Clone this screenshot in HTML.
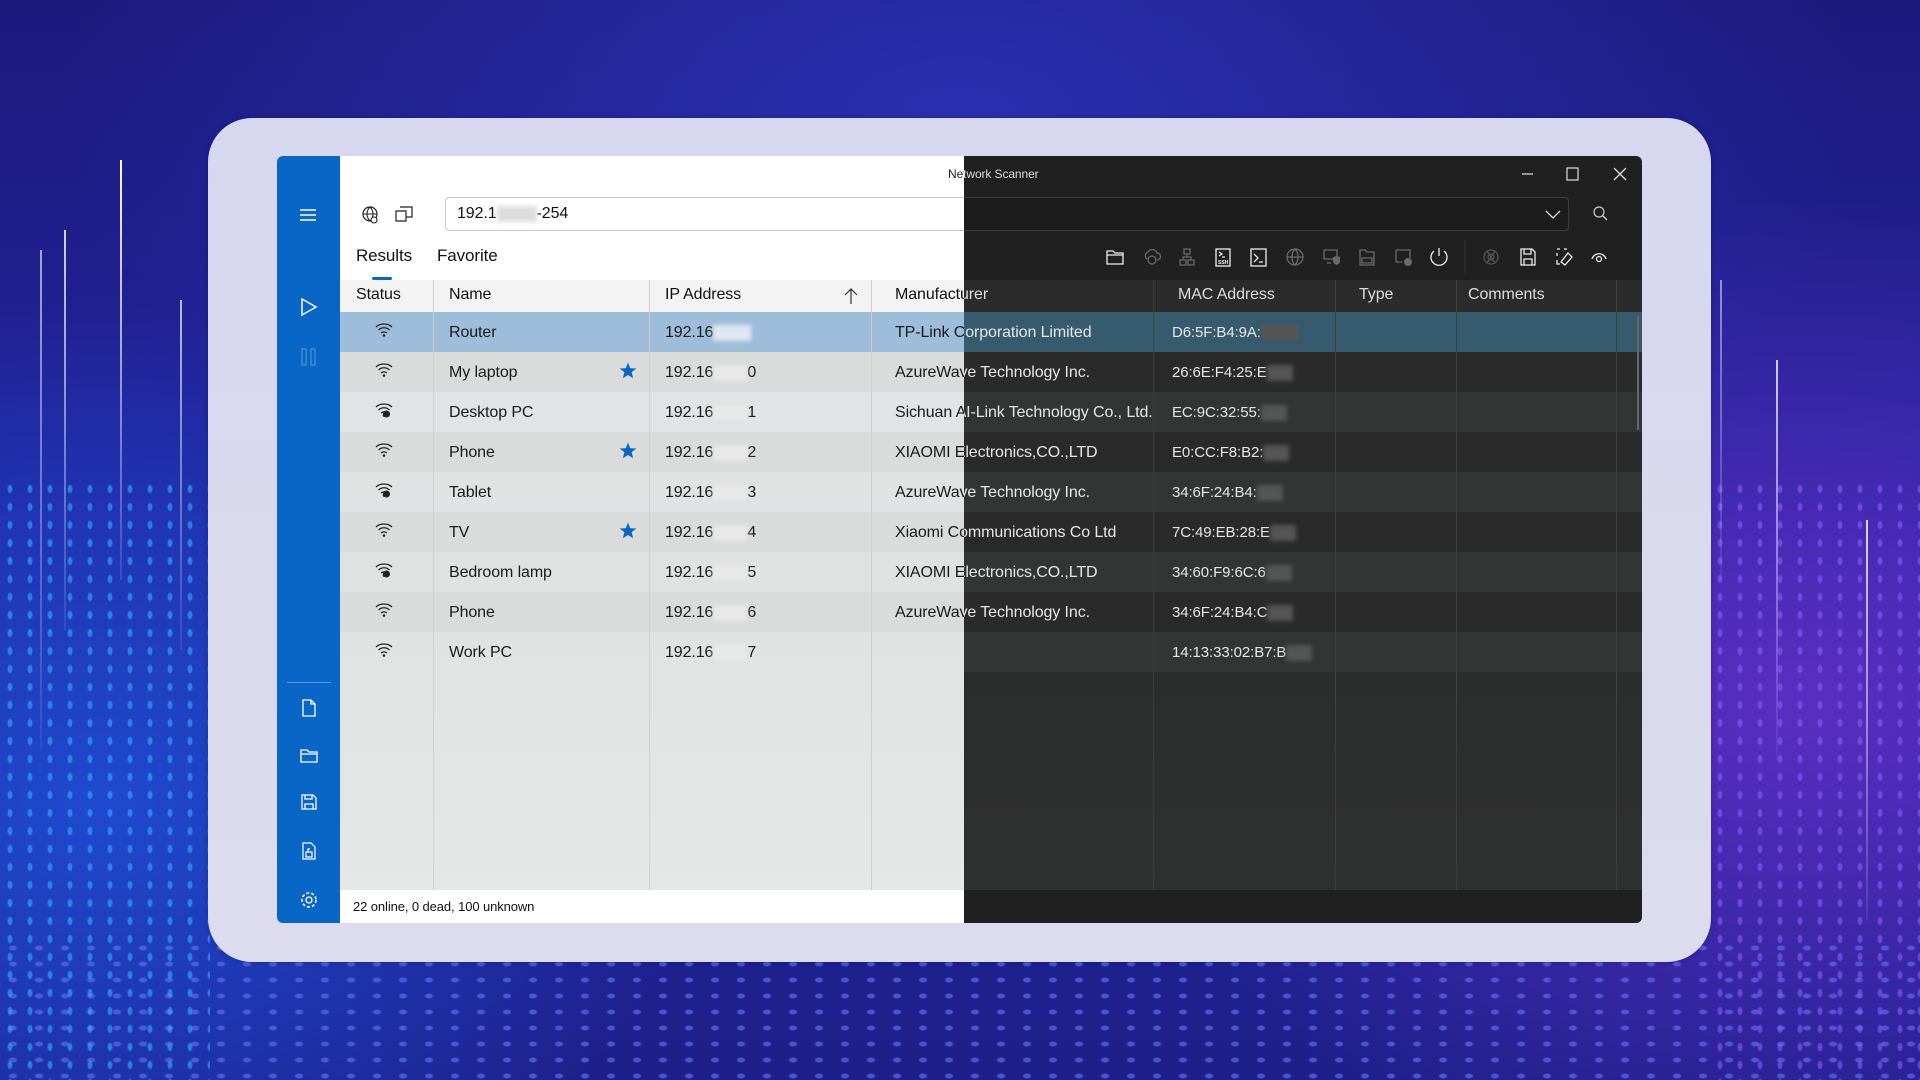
<!DOCTYPE html>
<html><head><meta charset="utf-8"><style>
*{margin:0;padding:0;box-sizing:border-box}
body{width:1920px;height:1080px;overflow:hidden;position:relative;font-family:"Liberation Sans",sans-serif;
background:radial-gradient(ellipse 900px 500px at 960px 120px,#2830b0 0%,rgba(40,48,176,0) 100%),
radial-gradient(ellipse 700px 500px at 1800px 700px,#5a2ec0 0%,rgba(90,46,192,0) 100%),
radial-gradient(ellipse 600px 500px at 100px 800px,#1f4ad0 0%,rgba(31,74,208,0) 100%),
linear-gradient(180deg,#1c1a7c 0%,#2224a0 50%,#1d1f8a 100%)}
.dots{position:absolute;left:0;right:0;top:940px;bottom:0;
background-image:radial-gradient(ellipse 5px 3px,#5a6cf0 60%,transparent 100%);background-size:26px 16px;opacity:.7}
.dotsl{position:absolute;left:0;top:480px;width:210px;height:600px;background-image:radial-gradient(ellipse 3px 5px,#32b0ff 60%,transparent 100%);background-size:20px 18px;opacity:.6}
.dotsr{position:absolute;right:0;top:480px;width:210px;height:600px;background-image:radial-gradient(ellipse 3px 5px,#8a5cff 60%,transparent 100%);background-size:20px 18px;opacity:.6}
.ln{position:absolute;width:2px;background:linear-gradient(#fff,rgba(255,255,255,.1))}
.frame{position:absolute;left:208px;top:118px;width:1503px;height:844px;border-radius:44px;background:linear-gradient(180deg,#d7d7ef,#dcdcee);box-shadow:0 0 6px rgba(0,0,0,.2)}
.win{position:absolute;left:277px;top:156px;width:1365px;height:767px;overflow:hidden;border-radius:6px}
.side{position:absolute;left:0;top:0;width:63px;height:767px;background:#0866c6}
.L{position:absolute;left:63px;top:0;width:624px;height:767px;background:#fff;overflow:hidden}
.R{position:absolute;left:687px;top:0;width:678px;height:767px;background:#202020;overflow:hidden}
.abs{position:absolute}
.t{position:absolute;font-size:16px;line-height:18px;white-space:nowrap;letter-spacing:-0.1px}
.blur{display:inline-block;width:38px;height:16px;vertical-align:middle;filter:blur(2px)}
svg{position:absolute;overflow:visible}
</style></head><body>
<div class="dots"></div><div class="dotsl"></div><div class="dotsr"></div>
<div class="ln" style="left:120px;top:160px;height:420px"></div>
<div class="ln" style="left:64px;top:230px;height:400px;opacity:.8"></div>
<div class="ln" style="left:40px;top:250px;height:500px;opacity:.6"></div>
<div class="ln" style="left:180px;top:300px;height:350px;opacity:.7"></div>
<div class="ln" style="left:1776px;top:360px;height:400px;background:linear-gradient(#d8c8ff,rgba(160,120,255,.1))"></div>
<div class="ln" style="left:1866px;top:520px;height:400px;opacity:.8"></div>
<div class="ln" style="left:1720px;top:280px;height:300px;opacity:.5"></div>
<div class="frame"></div>
<div class="win">
 <div class="side">
  <svg style="left:22px;top:52px" width="18" height="14"><path d="M1 2H17M1 7H17M1 12H17" stroke="#fff" stroke-width="1.6"/></svg>
  <svg style="left:24px;top:142px" width="16" height="18"><path d="M1 1L15 9L1 17Z" fill="none" stroke="#fff" stroke-width="1.5"/></svg>
  <svg style="left:24px;top:192px" width="16" height="18"><rect x="1" y="1" width="4" height="16" fill="none" stroke="#4b8fd6" stroke-width="1.3"/><rect x="10" y="1" width="4" height="16" fill="none" stroke="#4b8fd6" stroke-width="1.3"/></svg>
  <div class="abs" style="left:10px;top:526px;width:44px;height:1px;background:#5f9bdc"></div>
  <svg style="left:25px;top:543px" width="14" height="18"><path d="M1 1H9L13 5V17H1Z M9 1V5H13" fill="none" stroke="#fff" stroke-width="1.3"/></svg>
  <svg style="left:23px;top:592px" width="18" height="15"><path d="M1 2H7L9 4H17V14H1Z M1 6H17" fill="none" stroke="#fff" stroke-width="1.3"/></svg>
  <svg style="left:24px;top:638px" width="16" height="16"><path d="M1 1H12L15 4V15H1Z M4 1V5H11V1 M4 15V10H12V15" fill="none" stroke="#fff" stroke-width="1.3"/></svg>
  <svg style="left:25px;top:686px" width="14" height="18"><path d="M1 1H9L13 5V17H1Z M4 10H10V15H4Z M6 10V7H8" fill="none" stroke="#fff" stroke-width="1.2"/></svg>
  <svg style="left:23px;top:735px" width="18" height="18"><circle cx="9" cy="9" r="3" fill="none" stroke="#fff" stroke-width="1.3"/><circle cx="9" cy="9" r="7" fill="none" stroke="#fff" stroke-width="1.6" stroke-dasharray="3 2"/></svg>
 </div>
 <div class="L">
  <div class="abs" style="left:0;top:124px;width:624px;height:610px;background:linear-gradient(180deg,#e2e4e5,#e0e2e2 50%,#e6e7e7)"></div>
  <div class="t" style="left:608px;top:9px;font-size:12px;color:#222">Network Scanner</div>
  <svg style="left:21px;top:50px" width="18" height="18"><circle cx="9" cy="8" r="7" fill="none" stroke="#222" stroke-width="1.2"/><path d="M2 8H16M9 1C5 5 5 11 9 15M9 1C13 5 13 11 9 15" fill="none" stroke="#222" stroke-width="1.1"/><circle cx="13" cy="14" r="3" fill="#fff" stroke="#222" stroke-width="1.1"/></svg>
  <svg style="left:55px;top:50px" width="18" height="16"><path d="M5 1H17V11H11 M1 5H11V15H1Z" fill="none" stroke="#222" stroke-width="1.2"/></svg>
  <div class="abs" style="left:105px;top:41px;width:560px;height:34px;border:1px solid #c8c8c8;border-right:none;border-radius:4px 0 0 4px;background:#fff"></div>
  <div class="t" style="left:117px;top:49px;color:#111">192.1<span class="blur" style="background:#ddd;width:40px"></span>-254</div>
  <div class="t" style="left:16px;top:91px;font-size:17px;color:#111">Results</div>
  <div class="t" style="left:97px;top:91px;font-size:17px;color:#111">Favorite</div>
  <div class="abs" style="left:32px;top:121px;width:20px;height:3px;border-radius:2px;background:#0866c6"></div>
  <div class="abs" style="left:0;top:124px;width:624px;height:32px;background:#f3f3f3"></div>
  <div class="t" style="left:16px;top:130px;color:#111">Status</div>
  <div class="t" style="left:109px;top:130px;color:#111">Name</div>
  <div class="t" style="left:325px;top:130px;color:#111">IP Address</div>
  <svg style="left:504px;top:131px" width="14" height="18"><path d="M7 17V2M1 8L7 2L13 8" fill="none" stroke="#333" stroke-width="1.2"/></svg>
  <div class="t" style="left:555px;top:130px;color:#111">Manufacturer</div>
  <div id="lrows"></div>
  <div class="abs" style="left:0;top:734px;width:624px;height:33px;background:#fff"></div>
  <div class="t" style="left:13px;top:742px;font-size:13px;color:#111">22 online, 0 dead, 100 unknown</div>
 </div>
 <div class="R">
  <div class="t" style="left:-16px;top:9px;font-size:12px;color:#ddd">Network Scanner</div>
  <svg style="left:558px;top:11px" width="140" height="14"><path d="M0 7H11" stroke="#ddd" stroke-width="1.2"/><rect x="45" y="1" width="11" height="12" fill="none" stroke="#ddd" stroke-width="1.2"/><path d="M92 1L104 13M104 1L92 13" stroke="#ddd" stroke-width="1.3"/></svg>
  <div class="abs" style="left:-1px;top:41px;width:606px;height:34px;border:1px solid #3d3d3d;border-left:none;border-radius:0 4px 4px 0;background:#1c1c1c"></div>
  <svg style="left:581px;top:54px" width="16" height="10"><path d="M1 1L8 8L15 1" fill="none" stroke="#ddd" stroke-width="1.3"/></svg>
  <svg style="left:629px;top:50px" width="16" height="16"><circle cx="6" cy="6" r="5" fill="none" stroke="#ccc" stroke-width="1.2"/><path d="M10 10L14 14" stroke="#ccc" stroke-width="1.3"/></svg>
  <div id="ricons"></div>
  <div class="abs" style="left:0;top:124px;width:678px;height:32px;background:#2b2b2b"></div>
  <div class="abs" style="left:0;top:156px;width:678px;height:578px;background:linear-gradient(180deg,#2e2f2f,#2b2c2c 60%,#2f3030)"></div>
  <div class="t" style="left:-69px;top:130px;color:#ddd">Manufacturer</div>
  <div class="t" style="left:214px;top:130px;color:#ddd">MAC Address</div>
  <div class="t" style="left:395px;top:130px;color:#ddd">Type</div>
  <div class="t" style="left:504px;top:130px;color:#ddd">Comments</div>
  <div id="rrows"></div>
  <div class="abs" style="left:0;top:734px;width:678px;height:33px;background:#202020"></div>
 </div>
</div>
<script>
var rows=[["Router",0,"",'TP-Link Corporation Limited',"D6:5F:B4:9A:"],["My laptop",1,"0","AzureWave Technology Inc.","26:6E:F4:25:E"],["Desktop PC",0,"1","Sichuan AI-Link Technology Co., Ltd.","EC:9C:32:55:"],["Phone",1,"2","XIAOMI Electronics,CO.,LTD","E0:CC:F8:B2:"],["Tablet",0,"3","AzureWave Technology Inc.","34:6F:24:B4:"],["TV",1,"4","Xiaomi Communications Co Ltd","7C:49:EB:28:E"],["Bedroom lamp",0,"5","XIAOMI Electronics,CO.,LTD","34:60:F9:6C:6"],["Phone",0,"6","AzureWave Technology Inc.","34:6F:24:B4:C"],["Work PC",0,"7","","14:13:33:02:B7:B"]];
var dead=[2,4,6];
var L='',R='';
rows.forEach(function(r,i){
 var y=156+i*40;
 var lb=i==0?'#9dbdda':(i%2?'#dadbdb':'rgba(0,0,0,0)');
 var rb=i==0?'#365a6e':(i%2?'#2a2a2a':'#333434');
 L+='<div class="abs" style="left:0;top:'+y+'px;width:624px;height:40px;background:'+lb+'"></div>';
 R+='<div class="abs" style="left:0;top:'+y+'px;width:678px;height:40px;background:'+rb+'"></div>';
 var cy=y+20, ty=cy-8;
 L+='<svg style="left:35px;top:'+(cy-10)+'px" width="18" height="16"><path d="M1 5C5 1 13 1 17 5M3.5 8C6.5 5 11.5 5 14.5 8M6 11C8 9.5 10 9.5 12 11" fill="none" stroke="#222" stroke-width="1.3"/><circle cx="9" cy="13.5" r="1.3" fill="#222"/>'+(dead.indexOf(i)>=0?'<circle cx="11.5" cy="12" r="3.5" fill="#222"/>':'')+'</svg>';
 L+='<div class="t" style="left:109px;top:'+ty+'px;color:#1a1a1a">'+r[0]+'</div>';
 if(r[1])L+='<svg style="left:279px;top:'+(cy-10)+'px" width="18" height="17"><path d="M9 0.5L11.2 6.2L17.3 6.5L12.6 10.3L14.2 16.3L9 13L3.8 16.3L5.4 10.3L0.7 6.5L6.8 6.2Z" fill="#0a66c2"/></svg>';
 L+='<div class="t" style="left:325px;top:'+ty+'px;color:#1a1a1a">192.16<span class="blur" style="background:'+(i==0?'#dfe8f0':'#e8e8e8')+';width:'+(i==0?38:34)+'px"></span>'+r[2]+'</div>';
 if(r[3]){L+='<div class="t" style="left:555px;top:'+ty+'px;color:#1a1a1a">'+r[3]+'</div>';
 R+='<div class="t" style="left:-69px;top:'+ty+'px;color:#e6e6e6">'+r[3]+'</div>';}
 R+='<div class="t" style="left:208px;top:'+ty+'px;color:#e6e6e6;font-size:15px">'+r[4]+'<span class="blur" style="background:#555;width:'+(i==0?38:26)+'px"></span></div>';
});
[433,649,871].forEach(function(x){L+='<div class="abs" style="left:'+(x-340)+'px;top:124px;width:1px;height:610px;background:#d0d0d0"></div>';});
[1153,1335,1456,1616].forEach(function(x){R+='<div class="abs" style="left:'+(x-964)+'px;top:124px;width:1px;height:610px;background:#3e3e3e"></div>';});
R+='<div class="abs" style="left:673px;top:160px;width:2px;height:114px;background:#666"></div>';
document.getElementById('lrows').outerHTML=L;
document.getElementById('rrows').outerHTML=R;
var W='#eee',G='#6a6a6a';
function I(cx,col,inner){return '<g transform="translate('+(cx-10)+' 91)" fill="none" stroke="'+col+'" stroke-width="1.3">'+inner+'</g>';}
var ic='<svg style="left:0;top:0" width="678" height="124">'+
I(151,W,'<path d="M2 4H8L10 6H18V17H2Z M2 8H18"/>')+
I(188,G,'<path d="M5 12A4 4 0 0 1 6 5A5 5 0 0 1 15 6A3.5 3.5 0 0 1 15 13"/><circle cx="10" cy="13" r="4"/>')+
I(223,G,'<path d="M7 2H13V7H7Z M3 13H9V18H3Z M11 13H17V18H11Z M10 7V10H6V13 M10 10H14V13"/>')+
I(259,W,'<rect x="3" y="2" width="14" height="17"/><path d="M6 5L9 7L6 9M9 10H12"/><text x="5" y="17" font-size="5" fill="#eee" stroke="none" font-family="Liberation Sans" font-weight="bold">SSH</text>')+
I(295,W,'<rect x="2" y="2" width="15" height="17"/><path d="M5 7L9 11L5 15M10 15H14"/>')+
I(331,G,'<circle cx="10" cy="10" r="8"/><path d="M2 10H18M10 2C6 6 6 14 10 18M10 2C14 6 14 14 10 18"/>')+
I(367,G,'<path d="M3 3H16V12H3Z M6 16H10"/><path d="M12 10L16 9L19 10V14C19 17 16 18 16 18C16 18 12 17 12 14Z" fill="#6a6a6a" stroke="none"/>')+
I(403,G,'<path d="M3 3H8L10 5H17V18H3Z M5 11H15V16H5Z"/>')+
I(439,G,'<path d="M3 3H17V11 M3 3V15H9"/><circle cx="15" cy="15" r="4" fill="#6a6a6a" stroke="none"/>')+
I(475,W,'<path d="M10 1V9M5 4A8 8 0 1 0 15 4"/>')+
'<path d="M501 84V118" stroke="#333"/>'+
I(527,'#555','<circle cx="10" cy="10" r="7"/><circle cx="10" cy="10" r="3"/><path d="M6 4L14 16M14 4L6 16"/>')+
I(564,W,'<path d="M3 2H14L17 5V18H3Z M6 2V7H13V2 M6 18V12H14V18"/>')+
I(600,W,'<path d="M3 2H6M10 2H13M3 6V9M3 13V17H6"/><path d="M7 15L14 6L18 10L11 18Z"/>')+
I(635,W,'<path d="M3 12C5 5 15 5 17 12"/><circle cx="10" cy="12" r="2.5"/>')+
'</svg>';
document.getElementById('ricons').outerHTML=ic;
</script>
</body></html>
